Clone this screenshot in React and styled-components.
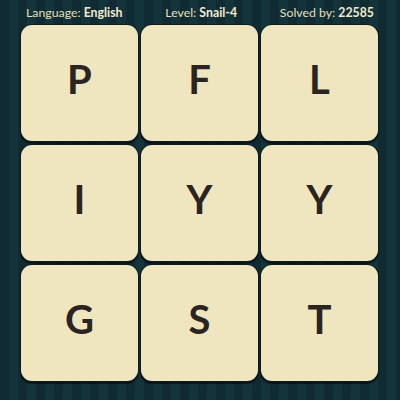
import styled, { createGlobalStyle } from "styled-components"

const Global = createGlobalStyle`
  html, body { margin: 0; padding: 0; }
  body {
    width: 400px;
    height: 400px;
    overflow: hidden;
    font-family: Lato, "Open Sans", sans-serif;
  }
`

const letters = ["P", "F", "L", "I", "Y", "Y", "G", "S", "T"]

const App = () => {
  return (
    <>
      <Global />
      <Board>
        <Header>
          <Stat>Language: <b>English</b></Stat>
          <Stat>Level: <b>Snail-4</b></Stat>
          <Stat>Solved by: <b>22585</b></Stat>
        </Header>
        <Grid>
          {letters.map((l, i) => (
            <Tile key={i}>{l}</Tile>
          ))}
        </Grid>
      </Board>
    </>
  )
}

const Board = styled.div`
  width: 400px;
  height: 400px;
  box-sizing: border-box;
  background-color: #12303a;
  background-image: repeating-linear-gradient(
    90deg,
    #112b32 0px,
    #112b32 9px,
    #14343c 9px,
    #14343c 18px
  );
  display: flex;
  flex-direction: column;
  padding: 0 21px;
`

const Header = styled.div`
  height: 24px;
  display: flex;
  align-items: center;
  justify-content: space-between;
  padding: 0 5px 0 5px;
`

const Stat = styled.span`
  color: #e6dfbd;
  font-size: 12.3px;
  b {
    font-weight: 700;
    color: #f2ead0;
  }
`

const Grid = styled.div`
  margin-top: 1px;
  display: grid;
  grid-template-columns: repeat(3, 117px);
  grid-template-rows: repeat(3, 116px);
  gap: 4px 3px;
`

const Tile = styled.div`
  background: #efe6bf;
  border-radius: 11px;
  box-shadow: 0 0 0 1px #0a1c20, 0 2px 1px 1px rgba(0, 0, 0, 0.55);
  display: flex;
  align-items: center;
  justify-content: center;
  padding-bottom: 8px;
  box-sizing: border-box;
  font-size: 40px;
  font-weight: 700;
  color: #2a2520;
`

export default App
